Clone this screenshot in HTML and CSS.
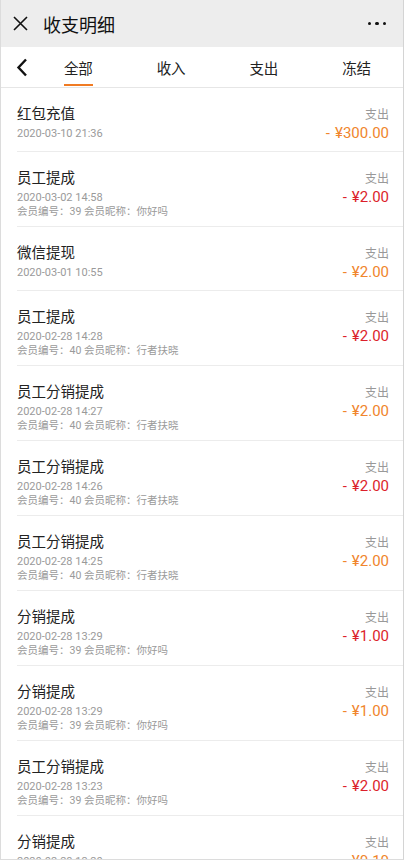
FILE: index.html
```html
<!DOCTYPE html>
<html lang="zh-CN">
<head>
    <meta charset="UTF-8">
    <meta name="viewport" content="width=device-width, initial-scale=1.0">
    <title>收支明细</title>
    <link rel="stylesheet" href="styles.css">
</head>
<body>
    <div class="page">
        <!-- 顶部标题栏 -->
        <div class="top-bar">
            <svg class="close-icon" width="15" height="15" viewBox="0 0 15 15">
                <path d="M1 1 L14 14 M14 1 L1 14" stroke="#111" stroke-width="1.6" fill="none"/>
            </svg>
            <span class="top-title">收支明细</span>
            <span class="more-dots"><i></i><i></i><i></i></span>
        </div>

        <!-- 分类标签 -->
        <div class="tabs">
            <div class="back">
                <svg width="12" height="19" viewBox="0 0 12 19">
                    <path d="M10 1.5 L2.5 9.5 L10 17.5" stroke="#111" stroke-width="2.4" fill="none"/>
                </svg>
            </div>
            <div class="tab active">全部</div>
            <div class="tab">收入</div>
            <div class="tab">支出</div>
            <div class="tab">冻结</div>
        </div>

        <div id="record-list"></div>
    </div>

    <script>
        const records = [
            { title: "红包充值", time: "2020-03-10 21:36", member: "", amount: "300.00", color: "orange" },
            { title: "员工提成", time: "2020-03-02 14:58", member: "会员编号：39 会员昵称：你好吗", amount: "2.00", color: "red" },
            { title: "微信提现", time: "2020-03-01 10:55", member: "", amount: "2.00", color: "orange" },
            { title: "员工提成", time: "2020-02-28 14:28", member: "会员编号：40 会员昵称：行者扶晓", amount: "2.00", color: "red" },
            { title: "员工分销提成", time: "2020-02-28 14:27", member: "会员编号：40 会员昵称：行者扶晓", amount: "2.00", color: "orange" },
            { title: "员工分销提成", time: "2020-02-28 14:26", member: "会员编号：40 会员昵称：行者扶晓", amount: "2.00", color: "red" },
            { title: "员工分销提成", time: "2020-02-28 14:25", member: "会员编号：40 会员昵称：行者扶晓", amount: "2.00", color: "orange" },
            { title: "分销提成", time: "2020-02-28 13:29", member: "会员编号：39 会员昵称：你好吗", amount: "1.00", color: "red" },
            { title: "分销提成", time: "2020-02-28 13:29", member: "会员编号：39 会员昵称：你好吗", amount: "1.00", color: "orange" },
            { title: "员工分销提成", time: "2020-02-28 13:23", member: "会员编号：39 会员昵称：你好吗", amount: "2.00", color: "red" },
            { title: "分销提成", time: "2020-02-28 13:20", member: "会员编号：39 会员昵称：你好吗", amount: "0.10", color: "orange" }
        ];

        const list = document.getElementById("record-list");
        records.forEach(function (r) {
            const row = document.createElement("div");
            row.className = "record";
            row.innerHTML = `
                <div class="record-left">
                    <div class="record-title">${r.title}</div>
                    <div class="record-time">${r.time}</div>
                    ${r.member ? `<div class="record-member">${r.member}</div>` : ""}
                </div>
                <div class="record-right">
                    <div class="record-type">支出</div>
                    <div class="record-amount ${r.color}"><span class="minus">-</span>¥${r.amount}</div>
                </div>
            `;
            list.appendChild(row);
        });
    </script>
</body>
</html>
```

FILE: styles.css
```css
/* 通用 */
body {
    margin: 0;
    padding: 0;
    background: #fff;
    font-family: Roboto, "Noto Sans CJK SC", sans-serif;
    color: #333;
}

.page {
    width: 404px;
    height: 860px;
    box-sizing: border-box;
    border-left: 1px solid #dcdcdc;
    border-right: 1px solid #d4d4d4;
    border-bottom: 1px solid #dcdcdc;
    overflow: hidden;
    background: #fff;
}

/* 顶部标题栏 */
.top-bar {
    height: 47px;
    background: #ededed;
    display: flex;
    align-items: center;
    padding: 0 17px 0 12px;
}

.close-icon {
    margin-right: 15px;
}

.top-title {
    font-size: 18px;
    color: #111;
    flex: 1;
}

.more-dots {
    display: flex;
    gap: 4px;
}

.more-dots i {
    width: 3.5px;
    height: 3.5px;
    border-radius: 50%;
    background: #111;
}

/* 标签栏 */
.tabs {
    height: 40px;
    display: flex;
    border-bottom: 1px solid #e6e6e6;
}

.back {
    width: 31px;
    display: flex;
    align-items: center;
    justify-content: flex-end;
    padding-right: 4px;
    box-sizing: border-box;
}

.tab {
    flex: 1;
    display: flex;
    align-items: center;
    justify-content: center;
    font-size: 14.5px;
    color: #222;
    position: relative;
}

.tab.active::after {
    content: "";
    position: absolute;
    bottom: 1px;
    left: 50%;
    width: 29px;
    margin-left: -14.5px;
    height: 2px;
    background: #f07b23;
}

/* 明细列表 */
.record {
    display: flex;
    justify-content: space-between;
    margin-left: 16px;
    padding: 16px 14px 9px 0;
    border-bottom: 1px solid #ececec;
}

.record-title {
    font-size: 14.5px;
    line-height: 22px;
    color: #222;
}

.record-time {
    font-size: 11px;
    line-height: 16px;
    color: #9a9a9a;
}

.record-member {
    font-size: 10.5px;
    line-height: 11px;
    color: #9a9a9a;
}

.record-right {
    text-align: right;
}

.record-type {
    font-size: 12px;
    line-height: 22px;
    color: #999;
}

.record-amount {
    font-size: 15px;
    line-height: 16px;
    margin-top: -1px;
}

.record-amount .minus {
    margin-right: 5px;
}

.record-amount.orange {
    color: #f0852c;
}

.record-amount.red {
    color: #dc1f2b;
}
```
